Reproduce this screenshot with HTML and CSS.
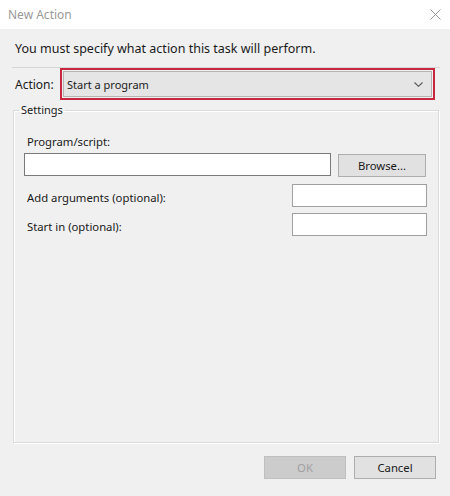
FILE: index.html
```html
<!DOCTYPE html>
<html>
<head>
<meta http-equiv="Content-Type" content="text/html; charset=utf-8" />
<title>New Action</title>
<link rel="stylesheet" href="styles.css">
</head>
<body>
 <div class="titlebar">
  <span class="title">New Action</span>
  <span class="close">
   <svg width="11" height="11" viewBox="0 0 11 11"><path d="M0.5 0.5 L10.5 10.5 M10.5 0.5 L0.5 10.5" stroke="#9a9a9a" stroke-width="1" fill="none"/></svg>
  </span>
 </div>
 <div class="main">
  <div class="intro">You must specify what action this task will perform.</div>
  <div class="sep"></div>
  <div class="action-row">
   <span class="action-label">Action:</span>
   <div class="highlight">
    <div class="combo">
     <span>Start a program</span>
     <svg width="9" height="5" viewBox="0 0 9 5"><path d="M0.5 0.5 L4.5 4.3 L8.5 0.5" stroke="#555" stroke-width="1.1" fill="none"/></svg>
    </div>
   </div>
  </div>
  <fieldset class="settings">
   <legend>Settings</legend>
   <div class="field-label">Program/script:</div>
   <div class="prog-row">
    <div class="textbox prog"></div>
    <div class="btn">Browse...</div>
   </div>
   <div class="opt-row first">
    <span>Add arguments (optional):</span>
    <div class="textbox small"></div>
   </div>
   <div class="opt-row">
    <span>Start in (optional):</span>
    <div class="textbox small"></div>
   </div>
  </fieldset>
  <div class="buttons">
   <div class="btn disabled">OK</div>
   <div class="btn">Cancel</div>
  </div>
 </div>
</body>
</html>
```

FILE: styles.css
```css
*{
 margin:0;
 padding:0;
 box-sizing:border-box;
}
body{
 width:450px;
 height:496px;
 background:#f0f0f0;
 font-family:"Noto Sans", "Open Sans", sans-serif;
 font-size:11.3px;
 color:#1a1a1a;
 overflow:hidden;
}
.titlebar{
 height:29px;
 background:#fff;
 display:flex;
 align-items:center;
 justify-content:space-between;
 padding:0 8px 1px 8px;
}
.title{
 color:#9a9a9a;
 font-size:12px;
}
.close{
 display:flex;
 margin-right:1px;
}
.main{
 padding:12px 10px 0 12px;
}
.intro{
 line-height:16px;
 margin-left:3px;
 font-size:12.5px;
}
.sep{
 margin-top:10px;
 height:1px;
 width:428px;
 background:#d6d6d6;
}
.action-row{
 display:flex;
 align-items:center;
 height:32px;
}
.action-label{
 width:48px;
 padding-left:3px;
 font-size:12px;
}
.highlight{
 width:375px;
 height:32px;
 border:2px solid #c8283e;
 padding:1px;
}
.combo{
 height:100%;
 background:#e5e5e5;
 border:1px solid #b4b4b4;
 display:flex;
 align-items:center;
 justify-content:space-between;
 padding:0 8px 0 3px;
 font-size:11px;
}
.settings{
 margin:2px 0 0 1px;
 width:426px;
 height:341px;
 border:1px solid #dadada;
 box-shadow:1px 1px 0 #fff, inset 1px 1px 0 #fff;
 padding:0 12px 0 10px;
}
.settings legend{
 margin-left:-5px;
 padding:0 2px;
 line-height:16px;
 font-size:11px;
}
.field-label{
 margin-top:16px;
 line-height:16px;
 padding-left:3px;
}
.prog-row{
 margin-top:3px;
 display:flex;
 justify-content:space-between;
 align-items:flex-start;
}
.textbox{
 height:23px;
 background:#fff;
 border:1px solid #7a7a7a;
}
.textbox.prog{
 width:307px;
}
.textbox.small{
 width:135px;
 border-color:#a0a0a0;
 margin-right:-1px;
}
.btn{
 width:88px;
 height:23px;
 margin-top:1px;
 background:#e1e1e1;
 border:1px solid #adadad;
 display:flex;
 align-items:center;
 justify-content:center;
}
.opt-row{
 margin-top:6px;
 display:flex;
 justify-content:space-between;
 align-items:center;
 padding-left:3px;
}
.opt-row.first{
 margin-top:7px;
}
.opt-row span{
 padding-top:4px;
}
.buttons{
 margin-top:13px;
 display:flex;
 justify-content:flex-end;
 gap:8px;
 padding-right:4px;
}
.buttons .btn{
 width:82px;
 margin-top:0;
}
.btn.disabled{
 background:#cccccc;
 border-color:#bfbfbf;
 color:#a0a0a0;
}
```
